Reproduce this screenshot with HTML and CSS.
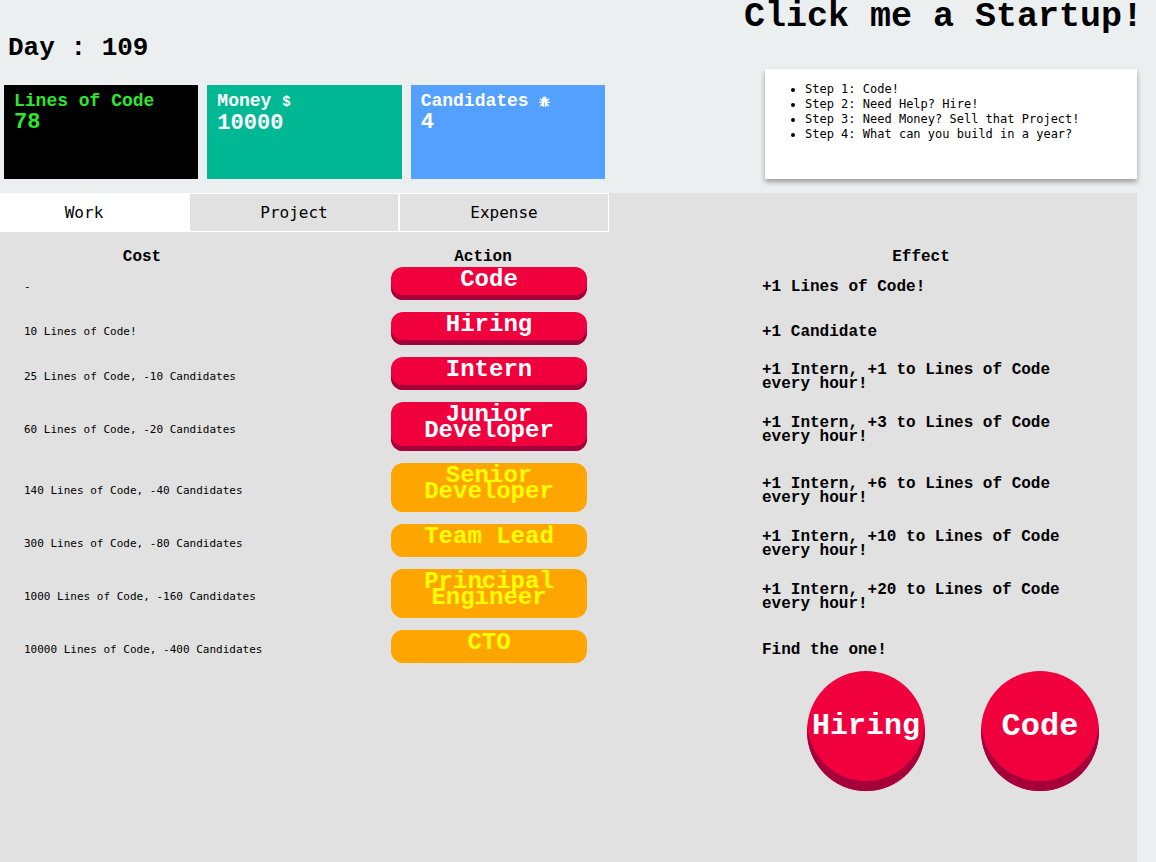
FILE: index.html
```html
<!DOCTYPE html>
<html lang="en">
  <head>
    <meta charset="UTF-8" />
    <meta name="viewport" content="width=device-width, initial-scale=1.0" />
    <title>Click me a Startup!</title>
    <link rel="stylesheet" href="styles.css">
  </head>
  <body>
    <h1 class="title">Click me a Startup!</h1>
    <header class="top">
      <div class="status">
        <h2 class="day">Day : <span id="day">109</span></h2>
        <div class="cards">
          <div class="card code">
            <div class="cardTitle">Lines of Code</div>
            <div class="amount" id="lines">78</div>
          </div>
          <div class="card money">
            <div class="cardTitle">Money <span class="dollar">$</span></div>
            <div class="amount" id="money">10000</div>
          </div>
          <div class="card candidates">
            <div class="cardTitle">Candidates
              <svg class="bug" viewBox="0 0 12 12" aria-hidden="true">
                <path d="M3.5 3a2.5 2.5 0 0 1 5 0v1h-5z M3 4h6v5a3 3 0 0 1-6 0z" fill="currentColor" />
                <path d="M1 3l2.500 2M11 3L8.500 5M0 7h12M1 11l2.500-2M11 11L8.500 9" stroke="currentColor" stroke-width="1.500" />
                <path d="M6 7v5" stroke="#54a0ff" stroke-width="0.8" />
              </svg>
            </div>
            <div class="amount" id="candidates">4</div>
          </div>
        </div>
      </div>
      <ul class="steps">
        <li>Step 1: Code!</li>
        <li>Step 2: Need Help? Hire!</li>
        <li>Step 3: Need Money? Sell that Project!</li>
        <li>Step 4: What can you build in a year?</li>
      </ul>
    </header>
    <main class="panel">
      <nav class="tabs">
        <button class="tab active">Work</button>
        <button class="tab">Project</button>
        <button class="tab">Expense</button>
      </nav>
      <table class="work">
        <thead>
          <tr>
            <th class="cost">Cost</th>
            <th class="action">Action</th>
            <th class="effect">Effect</th>
          </tr>
        </thead>
        <tbody>
          <tr>
            <td class="cost">-</td>
            <td class="action"><button class="push">Code</button></td>
            <td class="effect">+1 Lines of Code!</td>
          </tr>
          <tr>
            <td class="cost">10 Lines of Code!</td>
            <td class="action"><button class="push">Hiring</button></td>
            <td class="effect">+1 Candidate</td>
          </tr>
          <tr>
            <td class="cost">25 Lines of Code, -10 Candidates</td>
            <td class="action"><button class="push">Intern</button></td>
            <td class="effect">+1 Intern, +1 to Lines of Code every hour!</td>
          </tr>
          <tr>
            <td class="cost">60 Lines of Code, -20 Candidates</td>
            <td class="action"><button class="push">Junior Developer</button></td>
            <td class="effect">+1 Intern, +3 to Lines of Code every hour!</td>
          </tr>
          <tr>
            <td class="cost">140 Lines of Code, -40 Candidates</td>
            <td class="action"><button class="push locked">Senior Developer</button></td>
            <td class="effect">+1 Intern, +6 to Lines of Code every hour!</td>
          </tr>
          <tr>
            <td class="cost">300 Lines of Code, -80 Candidates</td>
            <td class="action"><button class="push locked">Team Lead</button></td>
            <td class="effect">+1 Intern, +10 to Lines of Code every hour!</td>
          </tr>
          <tr>
            <td class="cost">1000 Lines of Code, -160 Candidates</td>
            <td class="action"><button class="push locked">Principal Engineer</button></td>
            <td class="effect">+1 Intern, +20 to Lines of Code every hour!</td>
          </tr>
          <tr>
            <td class="cost">10000 Lines of Code, -400 Candidates</td>
            <td class="action"><button class="push locked">CTO</button></td>
            <td class="effect">Find the one!</td>
          </tr>
        </tbody>
      </table>
      <div class="quick">
        <button class="round">Hiring</button>
        <button class="round big">Code</button>
      </div>
    </main>
  </body>
</html>
```
FILE: styles.css
```css
* {
  box-sizing: border-box;
}
body {
  display: flex;
  flex-direction: column;
  min-height: 100vh;
  margin: 0;
  padding-right: 19px;
  background: #ebeff0;
  color: #000;
  font-family: "DejaVu Sans Mono", monospace;
}
button {
  border: none;
  cursor: pointer;
}
.title,
.day,
.cardTitle,
.amount,
.push,
.round,
th,
.effect {
  font-family: "Liberation Mono", monospace;
  font-weight: bold;
}
.title {
  margin: 0 -6px 0 0;
  font-size: 35px;
  line-height: 34px;
  text-align: right;
}

.top {
  display: flex;
  justify-content: space-between;
  align-items: flex-end;
  gap: 20px;
  margin-bottom: 14px;
}
.status {
  flex: 0 1 605px;
  padding-left: 4px;
}
.day {
  margin: 0 0 23px;
  padding-left: 4px;
  font-size: 26px;
  line-height: 28px;
}
.cards {
  display: grid;
  grid-template-columns: repeat(3, 1fr);
  gap: 9px;
}
.card {
  height: 94px;
  padding: 6px 10px;
  color: #fff;
}
.cardTitle {
  font-size: 18px;
  line-height: 20px;
  white-space: nowrap;
}
.amount {
  font-size: 22px;
  line-height: 24px;
}
.code {
  background: #000;
  color: #2ee62e;
}
.money {
  background: #00b894;
}
.candidates {
  background: #54a0ff;
}
.dollar {
  font-size: 14px;
}
.bug {
  width: 11px;
  height: 11px;
  vertical-align: -1px;
}
.steps {
  flex: 0 1 372px;
  height: 110px;
  margin: 0;
  padding: 13px 20px 13px 40px;
  background: #fff;
  box-shadow: 0 3px 5px rgba(0, 0, 0, 0.35);
  font-size: 12px;
  line-height: 15px;
}

.panel {
  flex: 1;
  padding-bottom: 20px;
  background: #e1e1e1;
}
.tabs {
  display: flex;
  margin: 0 0 15px -21px;
}
.tab {
  width: 210px;
  height: 39px;
  padding: 0;
  border: 1px solid #fff;
  background: #e1e1e1;
  color: #000;
  font-family: inherit;
  font-size: 16px;
}
.active {
  background: #fff;
}

.work {
  width: 100%;
  margin-bottom: -4px;
  border-collapse: collapse;
  table-layout: fixed;
}
th {
  height: 20px;
  padding: 0;
  font-size: 16px;
  line-height: 20px;
}
td {
  padding: 0 0 6px;
}
td.action {
  padding-bottom: 12px;
}
.cost {
  width: 391px;
  padding-left: 24px;
  font-size: 11px;
}
.action {
  width: 371px;
}
th.cost {
  padding-right: 131px;
  font-size: 16px;
}
th.action {
  padding-right: 187px;
}
.effect {
  padding-right: 57px;
  font-size: 16px;
  line-height: 14px;
}
.push {
  display: block;
  width: 196px;
  padding: 5px 20px 12px;
  border-radius: 12px;
  background: #f0003c;
  box-shadow: inset 0 -5px #a5003a;
  color: #fff;
  font-size: 24px;
  line-height: 16px;
}
.locked {
  background: #ffa500;
  box-shadow: none;
  color: #ff0;
}

.quick {
  display: flex;
  justify-content: flex-end;
  gap: 56px;
  padding-right: 38px;
}
.round {
  width: 118px;
  height: 120px;
  padding: 0 0 10px;
  border-radius: 50%;
  background: #f0003c;
  box-shadow: inset 0 -10px #a5003a;
  color: #fff;
  font-size: 30px;
}
.big {
  font-size: 32px;
}
```
